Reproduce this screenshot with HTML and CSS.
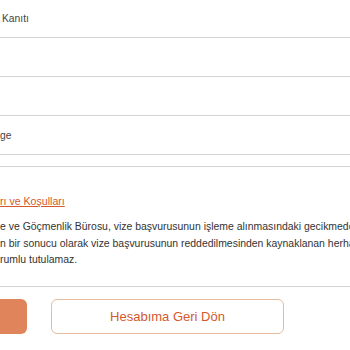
FILE: index.html
```html
<!DOCTYPE html>
<html lang="tr">
<head>
<meta charset="utf-8">
<link rel="stylesheet" href="styles.css">
</head>
<body>
<div class="page">
  <div class="rows">
    <div class="row first"><span class="label lead">Kanıtı</span></div>
    <div class="row"></div>
    <div class="row"></div>
    <div class="row"><span class="label">ge</span></div>
    <div class="row spacer"></div>
  </div>
  <div class="terms">
    <a class="link" href="#">rı ve Koşulları</a>
    <p class="note">e ve Göçmenlik Bürosu, vize başvurusunun işleme alınmasındaki gecikmeden<br>n bir sonucu olarak vize başvurusunun reddedilmesinden kaynaklanan herhangi<br>rumlu tutulamaz.</p>
  </div>
  <div class="actions">
    <button class="btn primary"></button>
    <button class="btn outline">Hesabıma Geri Dön</button>
  </div>
</div>
</body>
</html>
```
FILE: styles.css
```css
html, body {
  margin: 0;
  padding: 0;
  overflow: hidden;
  background: #fff;
}
.page {
  width: 350px;
  font-family: "Liberation Sans", Arial, sans-serif;
  font-size: 10.45px;
  color: #333;
}
.rows {
  display: flex;
  flex-direction: column;
}
.row {
  height: 38px;
  border-bottom: 1px solid #d4d4d4;
  display: flex;
  align-items: center;
}
.row.first {
  height: 37px;
}
.row.spacer {
  height: 11px;
}
.label {
  font-size: 10.3px;
  color: #444;
}
.label.lead {
  padding-left: 2px;
}
.terms {
  padding-top: 26px;
  border-bottom: 1px solid #d4d4d4;
  padding-bottom: 17px;
}
.link {
  display: block;
  color: #d4582c;
  text-decoration: underline;
  font-size: 10.6px;
  line-height: 16px;
}
.note {
  margin: 10px 0 0 0;
  line-height: 16.5px;
  white-space: nowrap;
  color: #333;
}
.actions {
  display: flex;
  gap: 24px;
  padding-top: 12px;
  margin-left: -10px;
}
.btn {
  height: 35px;
  border-radius: 6px;
  font-family: "Liberation Sans", Arial, sans-serif;
  font-size: 13px;
  padding: 0;
}
.primary {
  width: 37px;
  background: #e0845c;
  border: none;
}
.outline {
  width: 233px;
  background: #fff;
  border: 1px solid #e8b9a3;
  color: #d4582c;
}
```
